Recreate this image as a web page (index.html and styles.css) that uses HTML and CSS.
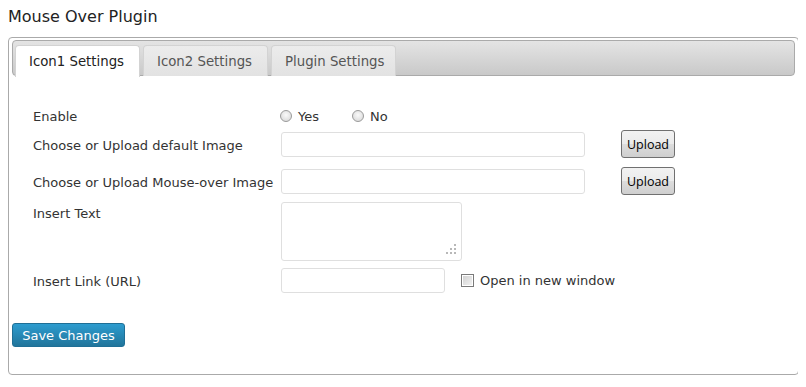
FILE: index.html
```html
<!DOCTYPE html>
<html lang="en">
<head>
  <meta charset="UTF-8">
  <title>Mouse Over Plugin</title>
  <link rel="stylesheet" href="styles.css">
</head>
<body>
  <h2 class="page-title">Mouse Over Plugin</h2>
  <div class="panel">
    <ul class="tabs">
      <li class="tab active">Icon1 Settings</li>
      <li class="tab">Icon2 Settings</li>
      <li class="tab">Plugin Settings</li>
    </ul>
    <form class="settings">
      <div class="row row-enable">
        <label class="label">Enable</label>
        <div class="field">
          <label class="choice"><input type="radio" name="enable" class="radio"> Yes</label>
          <label class="choice"><input type="radio" name="enable" class="radio"> No</label>
        </div>
      </div>
      <div class="row row-upload">
        <label class="label">Choose or Upload default Image</label>
        <div class="field">
          <input type="text" class="text wide">
          <button type="button" class="upload">Upload</button>
        </div>
      </div>
      <div class="row row-upload2">
        <label class="label">Choose or Upload Mouse-over Image</label>
        <div class="field">
          <input type="text" class="text wide">
          <button type="button" class="upload">Upload</button>
        </div>
      </div>
      <div class="row row-text">
        <label class="label">Insert Text</label>
        <div class="field">
          <span class="area-wrap">
            <textarea class="area"></textarea>
            <svg class="grip" width="10" height="10" viewBox="0 0 10 10">
              <rect x="8" y="0" width="2" height="2" fill="#b8b8b8"/>
              <rect x="4" y="4" width="2" height="2" fill="#b8b8b8"/>
              <rect x="8" y="4" width="2" height="2" fill="#b8b8b8"/>
              <rect x="0" y="8" width="2" height="2" fill="#b8b8b8"/>
              <rect x="4" y="8" width="2" height="2" fill="#b8b8b8"/>
              <rect x="8" y="8" width="2" height="2" fill="#b8b8b8"/>
            </svg>
          </span>
        </div>
      </div>
      <div class="row row-link">
        <label class="label">Insert Link (URL)</label>
        <div class="field">
          <input type="text" class="text short">
          <label class="check"><input type="checkbox" class="box"> Open in new window</label>
        </div>
      </div>
      <button type="button" class="save">Save Changes</button>
    </form>
  </div>
</body>
</html>
```

FILE: styles.css
```css
body {
  margin: 8px;
  background: #fff;
  color: #333;
  font-family: 'DejaVu Sans', Verdana, sans-serif;
  font-size: 13px;
}
.page-title {
  margin: 0;
  height: 29px;
  font-size: 16px;
  font-weight: normal;
  line-height: 18px;
  color: #222;
}
.panel {
  width: 783px;
  height: 331px;
  border: 1px solid #aaa;
  border-radius: 4px;
  padding: 2px 3px 3px 3px;
}
.tabs {
  list-style: none;
  margin: 0;
  padding: 4px 2px 0;
  height: 30px;
  display: flex;
  gap: 3px;
  border: 1px solid #aaa;
  border-radius: 4px;
  background: linear-gradient(#e4e4e4, #c9c9c9);
}
.tab {
  height: 30px;
  line-height: 31px;
  padding: 0 0 0 13px;
  box-sizing: content-box;
  width: 110px;
  border: 1px solid #d3d3d3;
  border-bottom: none;
  border-radius: 4px 4px 0 0;
  background: linear-gradient(#ececec, #e2e2e2);
  color: #555;
  font-size: 13.3px;
}
.tab.active {
  background: #fff;
  color: #222;
  height: 31px;
}
.settings {
  padding-top: 29px;
}
.row {
  display: grid;
  grid-template-columns: 248px 1fr;
  align-items: center;
  padding-left: 21px;
}
.label {
  color: #333;
  padding-top: 3px;
}
.field {
  display: flex;
  align-items: center;
}
.row-enable {
  height: 20px;
}
.row-enable .field {
  padding-top: 2px;
}
.row-upload {
  height: 27px;
  margin-top: 5px;
}
.row-upload2 {
  height: 27px;
  margin-top: 10px;
}
.row-text {
  height: 59px;
  margin-top: 8px;
  align-items: start;
}
.row-text .label {
  padding-top: 4px;
}
.row-link {
  height: 26px;
  margin-top: 6px;
}
.choice {
  display: flex;
  align-items: center;
  gap: 6px;
  margin-right: 34px;
  color: #333;
}
.radio {
  appearance: none;
  margin: 0 0 0 -1px;
  width: 12px;
  height: 12px;
  border: 1px solid #9a9a9a;
  border-radius: 50%;
  background: radial-gradient(circle at 50% 40%, #fafafa, #d4d4d4);
}
.text {
  height: 25px;
  box-sizing: border-box;
  border: 1px solid #dfdfdf;
  border-radius: 3px;
  background: #fff;
  margin: 0;
}
.wide {
  width: 304px;
}
.short {
  width: 164px;
}
.upload {
  margin-left: 36px;
  width: 54px;
  height: 28px;
  padding: 0;
  border: 1px solid #707070;
  border-radius: 3px;
  background: linear-gradient(#f2f2f2 0%, #ebebeb 50%, #dddddd 51%, #cfcfcf 100%);
  font-family: 'Open Sans', sans-serif;
  font-size: 12.5px;
  color: #000;
}
.area-wrap {
  position: relative;
  display: block;
  width: 181px;
  height: 59px;
}
.area {
  display: block;
  width: 181px;
  height: 59px;
  box-sizing: border-box;
  margin: 0;
  border: 1px solid #dfdfdf;
  border-radius: 3px;
  resize: none;
}
.grip {
  position: absolute;
  right: 6px;
  bottom: 7px;
}
.check {
  display: flex;
  align-items: center;
  gap: 6px;
  margin-left: 16px;
  color: #333;
}
.box {
  appearance: none;
  margin: 0;
  width: 13px;
  height: 13px;
  border: 1px solid #7a7a7a;
  background: linear-gradient(135deg, #cfcfcf, #f4f4f4);
  box-shadow: inset 0 0 0 1px #fff;
}
.save {
  margin-top: 30px;
  width: 113px;
  height: 24px;
  padding: 0;
  border: 1px solid #1f6f96;
  border-radius: 3px;
  background: linear-gradient(#2d9ccf, #21759b);
  color: #fff;
  font-family: 'DejaVu Sans', sans-serif;
  font-size: 13px;
  text-align: center;
}
```
